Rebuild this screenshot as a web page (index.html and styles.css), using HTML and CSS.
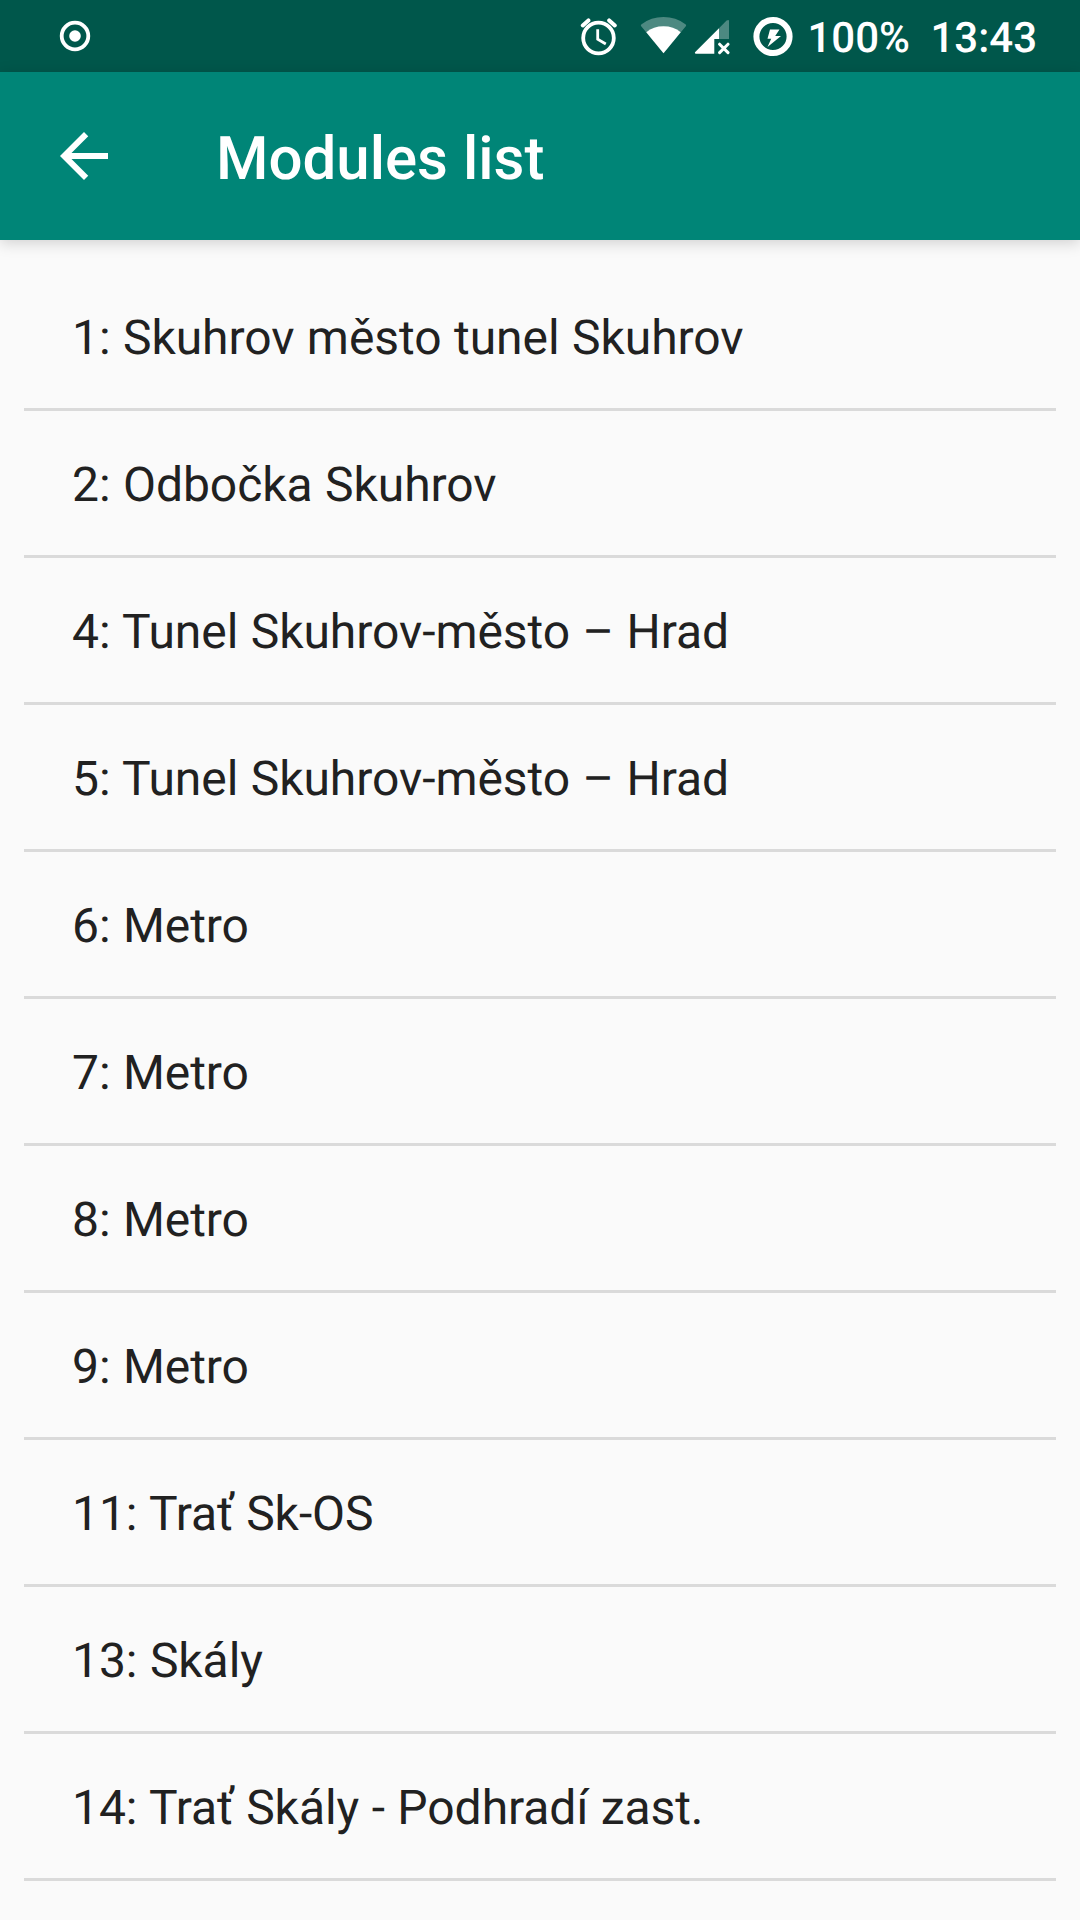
FILE: index.html
```html
<!DOCTYPE html>
<html lang="en">
<head>
<meta charset="utf-8">
<title>Modules list</title>
<link rel="stylesheet" href="styles.css">
</head>
<body>
<div class="screen">
  <div class="status-bar">
    <svg class="icon-record" viewBox="0 0 32 32"><circle cx="16" cy="16" r="13.3" fill="none" stroke="#fff" stroke-width="3.8"/><circle cx="16" cy="16" r="5.8" fill="#fff"/></svg>
    <div class="status-right">
      <svg class="icon-alarm" viewBox="580 16 38 40" fill="none" stroke="#fff"><circle cx="598.5" cy="38" r="15.3" stroke-width="3.8"/><path d="M582.8 25.4L588.4 20.4M614.8 25.4L609.2 20.4" stroke-width="4" stroke-linecap="round"/><path d="M597.7 29.2V39.3L605.8 44" stroke-width="2.8"/></svg>
      <svg class="icon-wifi" viewBox="640 16 47 38" fill="#fff"><path opacity=".3" d="M663.5 53.3L641 26Q640.4 25 641.6 24.2Q651 17 663.5 17T685.4 24.2Q686.6 25 686 26Z"/><path d="M663.5 53.3L646.3 32.2Q653.5 26.3 663.5 26.3T680.7 32.2Z"/></svg>
      <svg class="icon-signal" viewBox="694 18 36 37" fill="#fff"><path opacity=".3" d="M719 28.2L726.6 20.6Q729 19 729 21V39H719Z"/><path d="M695 52.3L719 28.2V39H714.3V53.8H695.6Q694.4 53.2 695 52.3Z"/><path d="M719.6 44.2L728 52.6M728 44.2L719.6 52.6" stroke="#fff" stroke-width="3" stroke-linecap="round"/></svg>
      <svg class="icon-battery" viewBox="753 15 41 41"><circle cx="773" cy="35.5" r="16.6" fill="none" stroke="#fff" stroke-width="6"/><path d="M770 28.5H779.5L775.2 35H781L767.5 46L771.2 37.7H767.5Z" fill="#fff"/></svg>
      <span class="battery-level">100%</span>
      <span class="clock">13:43</span>
    </div>
  </div>
  <header class="app-bar">
    <svg class="icon-back" viewBox="4 4 16 16" fill="#fff"><path d="M20 11H7.83l5.59-5.59L12 4l-8 8 8 8 1.41-1.41L7.83 13H20z"/></svg>
    <h1 class="title">Modules list</h1>
  </header>
  <ul class="modules">
    <li class="module">1: Skuhrov město tunel Skuhrov</li>
    <li class="module">2: Odbočka Skuhrov</li>
    <li class="module">4: Tunel Skuhrov-město – Hrad</li>
    <li class="module">5: Tunel Skuhrov-město – Hrad</li>
    <li class="module">6: Metro</li>
    <li class="module">7: Metro</li>
    <li class="module">8: Metro</li>
    <li class="module">9: Metro</li>
    <li class="module">11: Trať Sk-OS</li>
    <li class="module">13: Skály</li>
    <li class="module">14: Trať Skály - Podhradí zast.</li>
  </ul>
</div>
</body>
</html>
```
FILE: styles.css
```css
* { box-sizing: border-box; }
body {
  margin: 0;
  background: #fafafa;
  font-family: Roboto, "Noto Sans", sans-serif;
  text-rendering: geometricPrecision;
}
.screen {
  height: 1920px;
  overflow: hidden;
  display: flex;
  flex-direction: column;
}
.status-bar {
  flex: none;
  height: 72px;
  padding: 0 43px 0 59px;
  display: flex;
  align-items: center;
  justify-content: space-between;
  background: #00574b;
  color: #fff;
  font-size: 42px;
  font-weight: 500;
  line-height: 68px;
}
.status-right { display: flex; align-items: center; }
.icon-record { width: 32px; height: 32px; }
.icon-alarm { width: 38px; height: 40px; }
.icon-wifi { width: 47px; height: 38px; margin: 0 7px 2px 22px; }
.icon-signal { width: 36px; height: 37px; margin-top: 1px; }
.icon-battery { width: 41px; height: 41px; margin-left: 23px; margin-right: 13px; }
.battery-level { width: 123px; padding-top: 6px; }
.clock { padding-top: 6px; }
.app-bar {
  flex: none;
  height: 168px;
  padding-left: 60px;
  display: flex;
  align-items: center;
  background: #008577;
  color: #fff;
  box-shadow: 0 3px 14px rgba(0, 0, 0, .17);
}
.icon-back { width: 48px; height: 48px; }
.title {
  margin: 0 0 0 108px;
  padding-top: 5px;
  font-size: 60px;
  font-weight: 500;
  line-height: 72px;
}
.modules {
  flex: none;
  margin: 0;
  padding: 24px 24px 0;
  list-style: none;
}
.module {
  height: 147px;
  padding: 2px 48px 0;
  border-bottom: 3px solid #dadada;
  font-size: 48px;
  line-height: 144px;
  letter-spacing: -.05px;
  word-spacing: .6px;
  color: #212121;
  white-space: nowrap;
}
```
